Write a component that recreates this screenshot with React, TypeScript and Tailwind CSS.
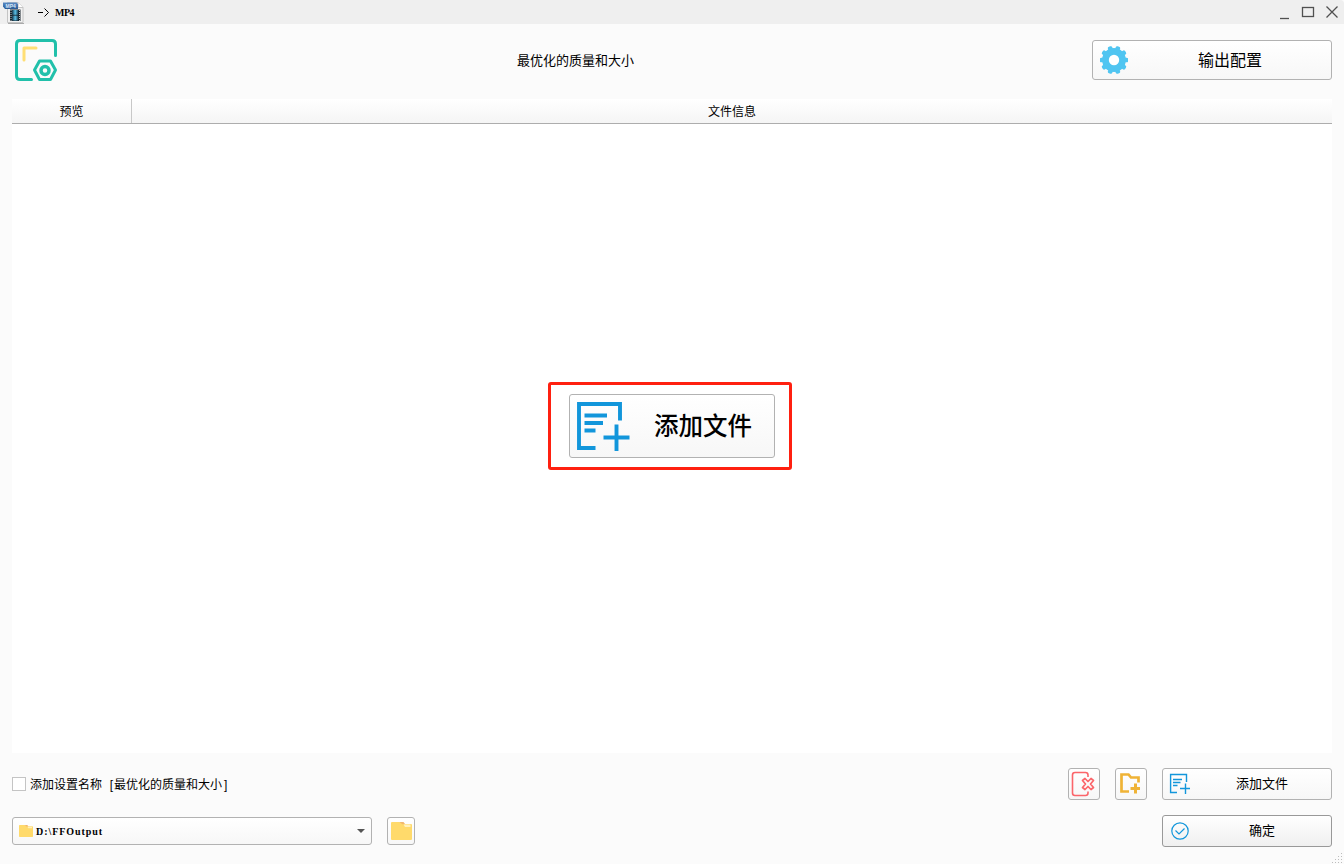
import type { ReactNode } from "react";

function AddFileIcon() {
  return (
    <svg width="56" height="56" viewBox="0 0 56 56" fill="none" stroke="#1296db" strokeWidth="3.900" className="shrink-0">
      <path d="M21.500 50H5V6H46V22.500" />
      <path d="M10.500 17.500H33M10.500 25H29M10.500 32.500H21.500" />
      <path d="M42.500 26.500V53M29.500 39.500H55.500" />
    </svg>
  );
}

function AddFileSmallIcon() {
  return (
    <svg width="22" height="22" viewBox="0 0 22 22" fill="none" stroke="#1296db" strokeWidth="1.400" className="shrink-0">
      <path d="M8 19.500H1.600V1.500H17.500V9" />
      <path d="M4 6.500H13M4 9.500H11.500M4 12.500H8.500" />
      <path d="M16.500 10.500V21M11 15.500H21" />
    </svg>
  );
}

function VideoFileIcon() {
  return (
    <svg width="24" height="24" viewBox="0 0 24 24" className="shrink-0">
      <defs>
        <linearGradient id="film" x1="0" x2="1">
          <stop offset="0" stopColor="#173447" />
          <stop offset=".5" stopColor="#58c0e8" />
          <stop offset="1" stopColor="#173447" />
        </linearGradient>
        <linearGradient id="tag" x1="0" y1="0" x2="0" y2="1">
          <stop offset="0" stopColor="#5b8cc4" />
          <stop offset="1" stopColor="#2a5a94" />
        </linearGradient>
      </defs>
      <path d="M7.500 2.500H18L23 7.500V22.500H7.500Z" fill="#f1f1f1" stroke="#c4c4c4" />
      <path d="M18 2.500V7.500H23" fill="#fff" stroke="#c4c4c4" />
      <path d="M8 23.500H24" stroke="#aaa" />
      <rect x="10" y="9.500" width="10.500" height="11.500" fill="#18242c" />
      <rect x="12" y="10" width="6.500" height="4.800" fill="url(#film)" />
      <rect x="12" y="15.600" width="6.500" height="4.900" fill="url(#film)" />
      <path d="M11 10V21M19.500 10V21" stroke="#dde8ee" strokeWidth=".8" strokeDasharray="1 1" />
      <path d="M3 2.500H16.500L18 4V9H5L3 6.500Z" fill="url(#tag)" />
      <text x="5.500" y="7.500" fontSize="5" fontWeight="700" fontFamily="Liberation Sans, sans-serif" fill="#d7e8fa">MP4</text>
    </svg>
  );
}

function ConfigIcon() {
  return (
    <svg width="44" height="44" viewBox="0 0 44 44" fill="none" stroke="#21c0aa" strokeWidth="3" strokeLinecap="round" strokeLinejoin="round">
      <path d="M17.500 41.500H6Q2.500 41.500 2.500 38V6Q2.500 2.500 6 2.500H38Q41.500 2.500 41.500 6V17.500" />
      <path d="M10 22V10H22" stroke="#ffdf75" />
      <path d="M25.500 23H36.500L41.500 32L36.500 41.500H25.500L20.500 32Z" />
      <circle cx="31" cy="32.500" r="4" strokeWidth="3.500" />
    </svg>
  );
}

function GearIcon() {
  return (
    <svg width="28" height="28" viewBox="-14 -14 28 28" className="shrink-0">
      <g fill="#50c5f1">
        <circle r="11.900" />
        {[18, 54, 90, 126, 162].map((a) => (
          <rect key={a} x="-2.300" y="-14.200" width="4.600" height="28.400" rx="1.600" transform={`rotate(${a})`} />
        ))}
      </g>
      <circle r="5.200" fill="#fff" />
    </svg>
  );
}

function FolderIcon({ width, height }: { width: number; height: number }) {
  return (
    <svg width={width} height={height} viewBox="0 0 21 18" preserveAspectRatio="none" className="shrink-0">
      <path d="M0 1Q0 0 1 0H8L14 2H20Q21 2 21 3V17Q21 18 20 18H1Q0 18 0 17Z" fill="#ffda6b" />
      <path d="M8 0H12.500L14 2L12 2.500Z" fill="#f2b76d" />
      <path d="M12.500 2.500H19.500V5H14Z" fill="#fff0bd" />
    </svg>
  );
}

function Button({ className, children }: { className: string; children: ReactNode }) {
  return (
    <button className={`flex shrink-0 items-center rounded-[3px] border bg-linear-to-b from-white ${className}`}>
      {children}
    </button>
  );
}

function TitleBar() {
  return (
    <header className="flex h-6 shrink-0 items-center rounded-t bg-[#efefef]">
      <VideoFileIcon />
      <div className="ml-[13px] flex items-center">
        <svg width="13" height="11" viewBox="0 0 13 11" fill="none" stroke="#000">
          <path d="M1 5.500H6M7.500 1.500L11.500 5.500L7.500 9.500" />
        </svg>
        <span className="ml-[5px] pt-px font-['Liberation_Serif',serif] text-[10px] leading-4 font-bold tracking-[-0.5px]">MP4</span>
      </div>
      <svg width="64" height="24" viewBox="0 0 64 24" fill="none" stroke="#505050" strokeWidth="1.300" className="ml-auto">
        <path d="M-1 18.500H9" />
        <rect x="22.500" y="7.500" width="11" height="9" />
        <path d="M46.500 6.500L57.500 17.500M57.500 6.500L46.500 17.500" />
      </svg>
    </header>
  );
}

export default function App() {
  return (
    <div className="relative flex h-screen flex-col bg-[#fbfbfb] font-['Liberation_Sans','Noto_Sans_CJK_SC',sans-serif] text-[13px] text-black">
      <TitleBar />
      <section className="flex h-[75px] shrink-0 items-center pr-3 pb-[3px] pl-3.5">
        <ConfigIcon />
        <div className="flex-1 pt-px pl-px text-center">最优化的质量和大小</div>
        <Button className="h-10 w-[240px] border-[#b2b2b2] to-[#f7f7f7] pl-[7px]">
          <GearIcon />
          <span className="flex-1 pt-0.5 pl-px text-center text-[16px]">输出配置</span>
        </Button>
      </section>

      <main className="mx-3 flex min-h-0 flex-1 flex-col bg-white">
        <div className="flex h-[25px] shrink-0 border-b border-[#adadad] bg-linear-to-b from-white to-[#f5f5f5] text-[12px]">
          <div className="flex w-[120px] items-center justify-center border-r border-[#c8c8c8] pt-0.5">预览</div>
          <div className="flex flex-1 items-center justify-center pt-0.5">文件信息</div>
        </div>
        <div className="flex flex-1 items-start justify-center pt-[258px] pr-1">
          <div className="flex h-[88px] w-[244px] items-center justify-center rounded-[3px] border-3 border-[#ff2010] pl-1">
            <Button className="h-16 w-[206px] border-[#b2b2b2] to-[#f7f7f7] pl-1">
              <AddFileIcon />
              <span className="ml-6 pt-[3px] font-['Liberation_Serif','Noto_Sans_CJK_SC',serif] text-[24.500px] font-medium">添加文件</span>
            </Button>
          </div>
        </div>
      </main>

      <footer className="flex h-[111px] shrink-0 flex-col gap-[15px] px-3 pt-[15px]">
        <div className="flex h-8 items-center">
          <span className="size-3.5 border border-[#c4c4c4] bg-white" />
          <span className="ml-1 flex pt-px text-[12px]">添加设置名称<span className="w-3 pr-px text-right">[</span>最优化的质量和大小<span className="ml-0.5">]</span></span>
          <div className="ml-auto flex items-center gap-[15px]">
            <Button className="size-8 justify-center border-[#b2b2b2] to-[#f7f7f7]">
              <svg width="32" height="32" viewBox="0 0 32 32" fill="none" stroke="#fb656a" strokeWidth="1.600" className="shrink-0">
                <path d="M20 9V7Q20 4.500 17.500 4.500H7Q4.500 4.500 4.500 7V25Q4.500 27.500 7 27.500H17.500Q20 27.500 20 25V23.500" />
                <path d="M14.500 12.500L17 10.500L20 13.500L23 10.500L25.500 12.500L22.500 16L25.500 19.500L23 21.500L20 18.500L17 21.500L14.500 19.500L17.500 16Z" strokeWidth="1.700" strokeLinejoin="round" />
              </svg>
            </Button>
            <Button className="size-8 justify-center border-[#b2b2b2] to-[#f7f7f7]">
              <svg width="32" height="32" viewBox="0 0 32 32" fill="none" stroke="#efb336" className="shrink-0">
                <path d="M14 23.500H6.500V6.500H13.500L16 9.500H23.500V14.500" strokeWidth="2.700" />
                <path d="M20.500 15.500V25.500M15.500 20.500H25" strokeWidth="3" />
              </svg>
            </Button>
            <Button className="h-8 w-[170px] border-[#b2b2b2] to-[#f7f7f7] pl-1.5">
              <AddFileSmallIcon />
              <span className="flex-1 pl-0.5 text-center">添加文件</span>
            </Button>
          </div>
        </div>
        <div className="flex h-8 items-center">
          <Button className="h-7 w-[360px] border-[#b2b2b2] to-[#f7f7f7] px-1.5">
            <FolderIcon width={14} height={12} />
            <span className="ml-[3px] pt-px font-['Liberation_Serif',serif] text-[10px] leading-4 font-bold tracking-[0.95px]">D:\FFOutput</span>
            <svg width="8" height="4" viewBox="0 0 8 4" className="ml-auto"><path d="M0 0H8L4 4Z" fill="#555" /></svg>
          </Button>
          <Button className="ml-[15px] size-7 justify-center border-[#b2b2b2] to-[#f7f7f7]">
            <FolderIcon width={21} height={18} />
          </Button>
          <Button className="ml-auto h-8 w-[170px] border-[#999] to-[#f0f0f0] pl-2">
            <svg width="18" height="18" viewBox="0 0 18 18" fill="none" stroke="#1296db" strokeWidth="1.200" className="shrink-0">
              <circle cx="9" cy="9" r="8.200" />
              <path d="M4.500 8.500L8 12L13.500 6.500" />
            </svg>
            <span className="flex-1 pl-1 text-center">确定</span>
          </Button>
        </div>
      </footer>
      <svg width="11" height="11" viewBox="0 0 11 11" fill="#bdbdbd" className="absolute right-px bottom-px">
        {[[9, 1], [6, 4], [9, 4], [3, 7], [6, 7], [9, 7], [0, 10], [3, 10], [6, 10], [9, 10]].map(([x, y]) => (
          <rect key={`${x}-${y}`} x={x} y={y} width="1" height="1" />
        ))}
      </svg>
    </div>
  );
}
